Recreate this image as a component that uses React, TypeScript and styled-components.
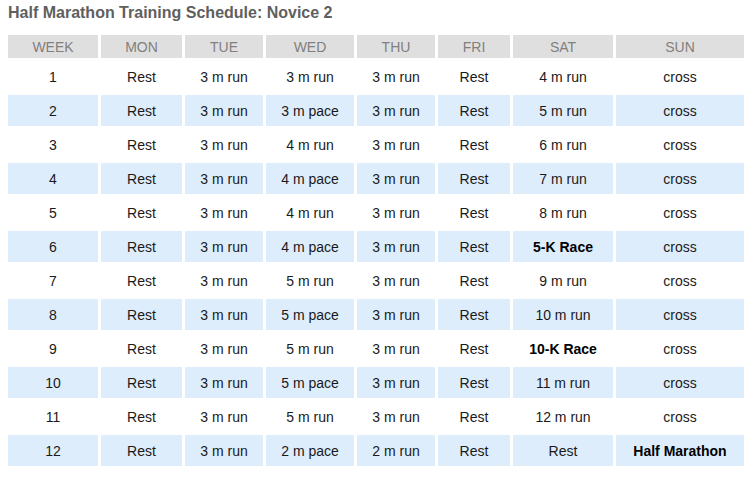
import React from "react";
import styled, { createGlobalStyle } from "styled-components";

const Global = createGlobalStyle`
  html, body { margin: 0; padding: 0; background: #fff; }
  body { font-family: "Liberation Sans", Arial, sans-serif; }
`;

const Page = styled.div`
  padding: 4px 0 0 0;
`;

const Title = styled.h2`
  margin: 0 0 10px 8px;
  font-size: 16px;
  line-height: 18px;
  font-weight: bold;
  color: #5f5f5f;
`;

const Table = styled.table`
  margin-left: 5px;
  border-collapse: separate;
  border-spacing: 3px;
  table-layout: fixed;
  width: 742px;
`;

const Head = styled.th<{ $w: number }>`
  width: ${(p) => p.$w}px;
  height: 23px;
  padding: 0;
  background: #e0dfdf;
  color: #808080;
  font-weight: normal;
  font-size: 14px;
  text-align: center;
  vertical-align: middle;
`;

const Row = styled.tr<{ $alt: boolean }>`
  background: ${(p) => (p.$alt ? "#deedfc" : "transparent")};
`;

const Cell = styled.td<{ $bold?: boolean }>`
  height: 31px;
  padding: 0;
  text-align: center;
  vertical-align: middle;
  font-size: 14px;
  color: #1a1a1a;
  font-weight: ${(p) => (p.$bold ? "bold" : "normal")};
  ${(p) => (p.$bold ? "color: #000;" : "")}
`;

const heads: [string, number][] = [
  ["WEEK", 90],
  ["MON", 81],
  ["TUE", 78],
  ["WED", 88],
  ["THU", 78],
  ["FRI", 72],
  ["SAT", 100],
  ["SUN", 128],
];

const rows: string[][] = [
  ["1", "Rest", "3 m run", "3 m run", "3 m run", "Rest", "4 m run", "cross"],
  ["2", "Rest", "3 m run", "3 m pace", "3 m run", "Rest", "5 m run", "cross"],
  ["3", "Rest", "3 m run", "4 m run", "3 m run", "Rest", "6 m run", "cross"],
  ["4", "Rest", "3 m run", "4 m pace", "3 m run", "Rest", "7 m run", "cross"],
  ["5", "Rest", "3 m run", "4 m run", "3 m run", "Rest", "8 m run", "cross"],
  ["6", "Rest", "3 m run", "4 m pace", "3 m run", "Rest", "*5-K Race", "cross"],
  ["7", "Rest", "3 m run", "5 m run", "3 m run", "Rest", "9 m run", "cross"],
  ["8", "Rest", "3 m run", "5 m pace", "3 m run", "Rest", "10 m run", "cross"],
  ["9", "Rest", "3 m run", "5 m run", "3 m run", "Rest", "*10-K Race", "cross"],
  ["10", "Rest", "3 m run", "5 m pace", "3 m run", "Rest", "11 m run", "cross"],
  ["11", "Rest", "3 m run", "5 m run", "3 m run", "Rest", "12 m run", "cross"],
  ["12", "Rest", "3 m run", "2 m pace", "2 m run", "Rest", "Rest", "*Half Marathon"],
];

export default function App() {
  return (
    <Page>
      <Global />
      <Title>Half Marathon Training Schedule: Novice 2</Title>
      <Table>
        <thead>
          <tr>
            {heads.map(([h, w]) => (
              <Head key={h} $w={w}>
                {h}
              </Head>
            ))}
          </tr>
        </thead>
        <tbody>
          {rows.map((r, i) => (
            <Row key={i} $alt={i % 2 === 1}>
              {r.map((c, j) => {
                const bold = c.startsWith("*");
                return (
                  <Cell key={j} $bold={bold}>
                    {bold ? c.slice(1) : c}
                  </Cell>
                );
              })}
            </Row>
          ))}
        </tbody>
      </Table>
    </Page>
  );
}
